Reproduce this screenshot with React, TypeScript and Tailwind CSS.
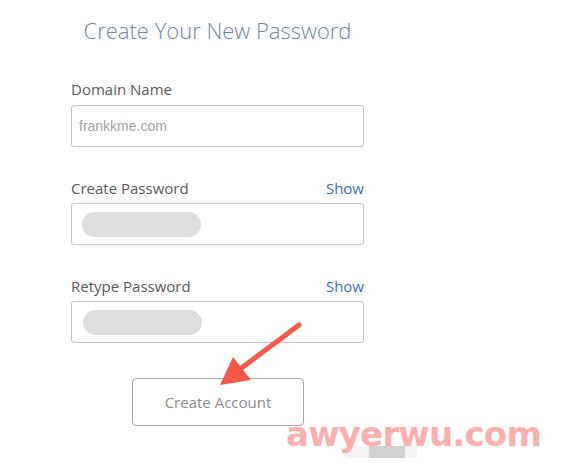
export default function App() {
  return (
    <div className="relative w-[562px] h-[466px] overflow-hidden bg-white font-['Open_Sans',sans-serif]">
      <div className="ml-[71px] w-[293px] flex flex-col">
        <h1 className="mt-[15px] h-[30px] text-center text-[22px] leading-[30px] font-light text-[#6f859b]">
          Create Your New Password
        </h1>

        <label className="mt-[34px] h-[20px] text-[15px] leading-[20px] text-[#5a5a5a]">Domain Name</label>
        <div className="mt-[6px] h-[42px] rounded-[3px] border border-[#c6c6c6] flex items-center px-[7px]">
          <span className="font-['Liberation_Sans',sans-serif] text-[14px] text-[#a3a3a3]">frankkme.com</span>
        </div>

        <div className="mt-[31px] h-[20px] flex items-center justify-between text-[15px] leading-[20px]">
          <span className="text-[#5a5a5a]">Create Password</span>
          <span className="text-[#3b6fb6]">Show</span>
        </div>
        <div className="mt-[5px] h-[42px] rounded-[3px] border border-[#c6c6c6] flex items-center px-[10px]">
          <div className="w-[119px] h-[25px] rounded-full bg-[#dedede]" />
        </div>

        <div className="mt-[31px] h-[20px] flex items-center justify-between text-[15px] leading-[20px]">
          <span className="text-[#5a5a5a]">Retype Password</span>
          <span className="text-[#3b6fb6]">Show</span>
        </div>
        <div className="mt-[5px] h-[42px] rounded-[3px] border border-[#c6c6c6] flex items-center px-[11px]">
          <div className="w-[119px] h-[25px] rounded-full bg-[#dedede]" />
        </div>

        <button className="mt-[35px] self-center ml-[1px] w-[172px] h-[48px] rounded-[4px] border border-[#a5a5a5] text-[15px] text-[#8a8a8a]">
          Create Account
        </button>
      </div>

      <svg className="absolute left-0 top-0" width="562" height="466" viewBox="0 0 562 466">
        <line x1="299" y1="325" x2="236" y2="372" stroke="#f5574a" strokeWidth="5" strokeLinecap="round" />
        <polygon points="220,385 233,357 251,380" fill="#f5574a" />
      </svg>

      <div className="absolute left-[345px] top-[446px] flex h-[12px]">
        <div className="w-[24px] bg-[#f3f3f3]" />
        <div className="w-[36px] bg-[#d0d0d0]" />
        <div className="w-[12px] bg-[#f3f3f3]" />
      </div>

      <div className="absolute left-[286px] top-[414px] font-['DejaVu_Sans',sans-serif] font-bold text-[34px] leading-[40px] tracking-[-0.8px] text-[#fdaeae]">
        awyerwu.com
      </div>
    </div>
  )
}
